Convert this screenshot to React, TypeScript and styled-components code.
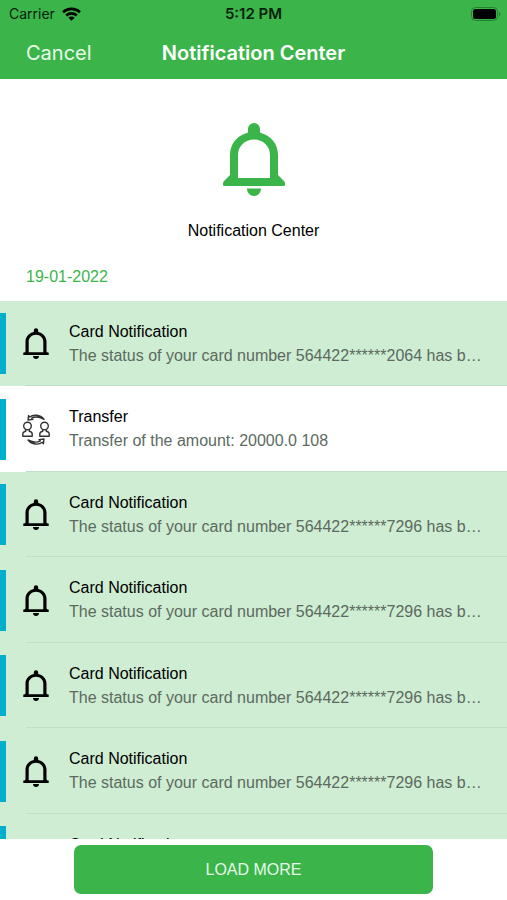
import React from "react";
import styled, { createGlobalStyle } from "styled-components";

const green = "#3bb54a";

const GlobalStyle = createGlobalStyle`
  *, *::before, *::after { box-sizing: border-box; }
  body {
    margin: 0;
    background: #ffffff;
    color: #000000;
    font-family: "Liberation Sans", Arial, Helvetica, sans-serif;
    font-size: 16px;
  }
`;

const Screen = styled.div`
  display: flex;
  flex-direction: column;
  height: 100vh;
`;

const Header = styled.header`
  flex: none;
  background: ${green};
  font-family: Inter, "Liberation Sans", sans-serif;
`;

const StatusBar = styled.div`
  display: grid;
  grid-template-columns: 1fr auto 1fr;
  align-items: center;
  height: 27px;
  padding: 0 6px;
  font-size: 14px;
  color: #06200a;
`;

const Carrier = styled.div`
  display: flex;
  align-items: center;
  gap: 7px;
  padding-left: 3px;
`;

const Clock = styled.time`
  font-size: 15px;
  font-weight: 600;
`;

const Battery = styled.svg`
  justify-self: end;
`;

const NavBar = styled.nav`
  display: grid;
  grid-template-columns: 1fr auto 1fr;
  align-items: center;
  height: 52px;
  padding: 0 26px;
  color: #ffffff;
`;

const CancelButton = styled.button`
  justify-self: start;
  padding: 0;
  border: 0;
  background: none;
  color: #eafbec;
  font: inherit;
  font-size: 20px;
  cursor: pointer;
`;

const Title = styled.h1`
  margin: 0;
  font-size: 20px;
  font-weight: 600;
`;

const Hero = styled.section`
  display: flex;
  flex: none;
  flex-direction: column;
  align-items: center;
  gap: 25px;
  padding-top: 44px;
`;

const HeroLabel = styled.p`
  margin: 0;
  line-height: 20px;
`;

const DateHeading = styled.h2`
  flex: none;
  margin: 0;
  padding: 26px 26px 14px;
  color: ${green};
  font-size: 16px;
  font-weight: 400;
  line-height: 20px;
`;

const List = styled.ul`
  flex: 1;
  min-height: 0;
  margin: 0;
  padding: 0;
  overflow-y: auto;
  scrollbar-width: none;
  list-style: none;
`;

const Row = styled.li<{ $unread: boolean }>`
  display: flex;
  align-items: center;
  height: 85px;
  padding-right: 22px;
  background-color: ${(p) => (p.$unread ? "#ceedd3" : "#ffffff")};
  background-image: linear-gradient(#c1dfc6, #c1dfc6);
  background-position: 26px 100%;
  background-size: 100% 1px;
  background-repeat: no-repeat;

  &:nth-child(even) {
    height: 86px;
  }
`;

const Marker = styled.span`
  flex: none;
  width: 6px;
  height: 61px;
  background: #00afcc;
`;

const IconSlot = styled.span`
  display: flex;
  flex: none;
  justify-content: center;
  width: 60px;
`;

const RowText = styled.div`
  flex: 1;
  min-width: 0;
  margin-left: 3px;
`;

const RowTitle = styled.h3`
  margin: 0;
  font-size: 16px;
  font-weight: 400;
  line-height: 24px;
`;

const RowBody = styled.p`
  margin: 0;
  overflow: hidden;
  color: #5c6a5f;
  line-height: 24px;
  text-overflow: ellipsis;
  white-space: nowrap;
`;

const Footer = styled.footer`
  display: flex;
  flex: none;
  justify-content: center;
  padding: 6px 74px;
`;

const LoadMore = styled.button`
  flex: 1;
  height: 49px;
  padding: 0;
  border: 0;
  border-radius: 7px;
  background: ${green};
  color: #e6fae8;
  font: inherit;
  cursor: pointer;
`;

const HeroBell = () => (
  <svg width="62" height="73" viewBox="0 0 62 73" fill={green} aria-hidden="true">
    <path
      fillRule="evenodd"
      d="M25 9.500V6a6 6 0 0 1 12 0v3.500C48 12.500 55 21 55 32v20l6 6c1.500 1.500 1.500 5 0 5H1c-1.500 0-1.500-3.500 0-5l6-6V32C7 21 14 12.500 25 9.500ZM15 55h32V32c0-9-7-15.500-16-15.500S15 23 15 32Z"
    />
    <path d="M24 65.500h14c0 4-3 7.500-7 7.500s-7-3.500-7-7.500Z" />
  </svg>
);

const BellIcon = () => (
  <svg width="26" height="31" viewBox="0 0 26 31" aria-hidden="true">
    <path
      fillRule="evenodd"
      d="M10.800 4V2.500a2.200 2.200 0 0 1 4.400 0V4c5 1 8.300 5 8.300 9.500v10l1 1h1.200v2.500H.3v-2.500h1.200l1-1v-10C2.500 9 5.800 5 10.800 4ZM5.700 24.300h14.600V13.500c0-4-3.300-6.800-7.300-6.800s-7.300 2.800-7.300 6.800Z"
    />
    <path d="M10 28h6c0 1.700-1.300 3-3 3s-3-1.300-3-3Z" />
  </svg>
);

const TransferIcon = () => (
  <svg
    width="28"
    height="31"
    viewBox="0 0 28 31"
    fill="none"
    stroke="#333333"
    strokeWidth="1.400"
    strokeLinejoin="round"
    aria-hidden="true"
  >
    <circle cx="5.500" cy="12" r="3.800" />
    <path d="M3.700 15.500v1.800Q.8 18 .8 20v2.300h9.400V20q0-2-2.900-2.700v-1.800" />
    <circle cx="22.500" cy="12" r="3.800" />
    <path d="M20.700 15.500v1.800q-2.900.7-2.900 2.700v2.300h9.400V20q0-2-2.900-2.700v-1.800" />
    <path d="M22 5.300C18 .5 11 .2 7.800 3L6.600 1.600 6 6l5-.6-1.300-1.200C12.500 2.500 17 2.500 22 5.300Z" />
    <path d="M6 26c4 5 11 5 14.200 2.300l1.200 1.400.6-4.700-5 .6 1.300 1.200C15.500 28.500 11 28.500 6 26Z" />
  </svg>
);

const WifiIcon = () => (
  <svg width="19" height="14" viewBox="0 0 19 14" aria-hidden="true">
    <g fill="none" stroke="#000000" strokeWidth="2.600">
      <path d="M1 5.200C5.700.8 13.300.8 18 5.200" />
      <path d="M4.200 8.500c3-2.800 7.600-2.800 10.600 0" />
    </g>
    <path d="M9.500 13.800 6.400 10.700c1.800-1.600 4.400-1.600 6.200 0Z" />
  </svg>
);

const BatteryIcon = () => (
  <Battery width="30" height="14" viewBox="0 0 30 14" role="img" aria-label="Battery full">
    <rect x=".5" y=".5" width="26" height="13" rx="4" fill="none" stroke="#238230" />
    <rect x="2" y="2" width="23" height="10" rx="2.500" />
    <path d="M28 5v4c2-.8 2-3.200 0-4Z" fill="#238230" />
  </Battery>
);

type Notice = { kind: "card" | "transfer"; title: string; body: string };

const card = (number: string): Notice => ({
  kind: "card",
  title: "Card Notification",
  body: `The status of your card number ${number} has been changed`,
});

const notices: Notice[] = [
  card("564422******2064"),
  { kind: "transfer", title: "Transfer", body: "Transfer of the amount: 20000.0 108" },
  card("564422******7296"),
  card("564422******7296"),
  card("564422******7296"),
  card("564422******7296"),
  card("564422******7296"),
];

export default function App() {
  return (
    <>
      <GlobalStyle />
      <Screen>
        <Header>
          <StatusBar>
            <Carrier>
              Carrier
              <WifiIcon />
            </Carrier>
            <Clock>5:12 PM</Clock>
            <BatteryIcon />
          </StatusBar>
          <NavBar>
            <CancelButton type="button">Cancel</CancelButton>
            <Title>Notification Center</Title>
          </NavBar>
        </Header>
        <Hero>
          <HeroBell />
          <HeroLabel>Notification Center</HeroLabel>
        </Hero>
        <DateHeading>19-01-2022</DateHeading>
        <List>
          {notices.map((notice, index) => (
            <Row key={index} $unread={notice.kind === "card"}>
              <Marker />
              <IconSlot>{notice.kind === "card" ? <BellIcon /> : <TransferIcon />}</IconSlot>
              <RowText>
                <RowTitle>{notice.title}</RowTitle>
                <RowBody>{notice.body}</RowBody>
              </RowText>
            </Row>
          ))}
        </List>
        <Footer>
          <LoadMore type="button">LOAD MORE</LoadMore>
        </Footer>
      </Screen>
    </>
  );
}
